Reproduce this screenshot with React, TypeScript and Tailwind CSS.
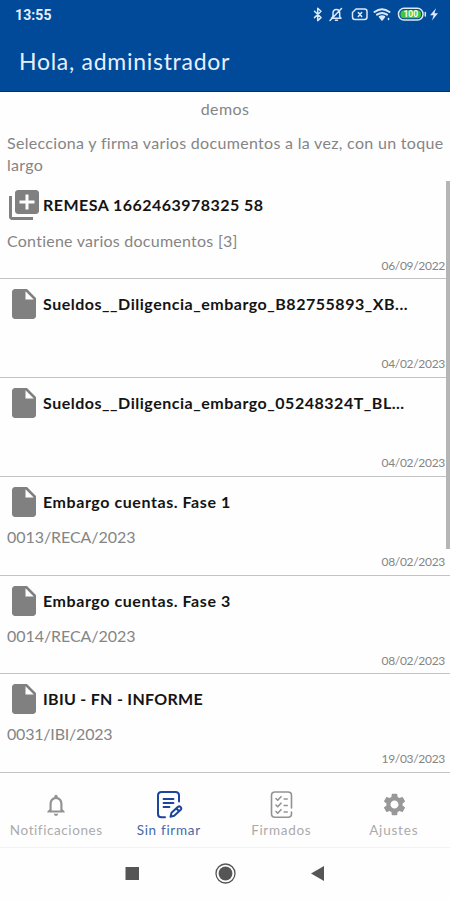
import React from "react";
import { MdInsertDriveFile, MdLibraryAdd, MdNotificationsNone, MdSettings } from "react-icons/md";

type Doc = { title: string; subtitle?: string; date: string; batch?: boolean; titleClass: string; subClass?: string };

const docs: Doc[] = [
  { title: "REMESA 1662463978325 58", subtitle: "Contiene varios documentos [3]", date: "06/09/2022", batch: true, titleClass: "tracking-[0.46px]", subClass: "tracking-[0.25px]" },
  { title: "Sueldos__Diligencia_embargo_B82755893_XB...", date: "04/02/2023", titleClass: "tracking-[0.52px]" },
  { title: "Sueldos__Diligencia_embargo_05248324T_BL...", date: "04/02/2023", titleClass: "tracking-[0.52px]" },
  { title: "Embargo cuentas. Fase 1", subtitle: "0013/RECA/2023", date: "08/02/2023", titleClass: "tracking-[0.57px]", subClass: "tracking-[-0.06px]" },
  { title: "Embargo cuentas. Fase 3", subtitle: "0014/RECA/2023", date: "08/02/2023", titleClass: "tracking-[0.57px]", subClass: "tracking-[-0.06px]" },
  { title: "IBIU - FN - INFORME", subtitle: "0031/IBI/2023", date: "19/03/2023", titleClass: "tracking-[0.3px]", subClass: "tracking-[-0.2px]" },
];

function StatusIcons() {
  return (
    <svg width="128" height="18" viewBox="312 6 128 18" fill="none" stroke="#dce8fa" strokeWidth="1.5" strokeLinecap="round" strokeLinejoin="round">
      <path d="M314.500 11.200l6.500 6.400-3.300 3V8.200l3.300 3-6.500 6.400" />
      <path d="M331.5 18.2h9.5l-1.3-1.6v-3.4c0-2.2-1.3-3.8-3.3-3.8s-3.4 1.6-3.4 3.8v3.4zM335.4 20.2h2M341.5 8.5l-11.5 12" />
      <path d="M356 9h8.5q2.5 0 2.500 2.500V17q0 2.500-2.500 2.500H355q-2.500 0-2.500-2.500v-4.500zM358.300 12.500l3.400 4M361.700 12.500l-3.400 4" />
      <path d="M374.500 12q7.500-5.500 15 0M377 14.700q5-3.400 10 0" strokeWidth="2" />
      <path d="M379.500 16.700q2.700-1.500 5 0L382 20z" fill="#dce8fa" />
      <path d="M388.500 18.500v1" />
      <rect x="398.500" y="8.300" width="24.500" height="11.800" rx="5.500" />
      <rect x="400.500" y="10.200" width="20.500" height="8" rx="3.500" fill="#45c53c" stroke="none" />
      <path d="M425.300 12.500v3.500" />
      <path d="M436 8.200l-6 7h3.500l-1.500 5.300 6-7.300h-3.500z" fill="#dce8fa" stroke="none" />
      <text x="410.800" y="17.300" fill="#ffffff" stroke="none" fontSize="8.500" fontWeight="700" textAnchor="middle" fontFamily="Roboto, sans-serif">100</text>
    </svg>
  );
}

function SignIcon() {
  return (
    <svg width="28" height="30" viewBox="0 0 28 30" fill="none" stroke="#1c459c" strokeWidth="2" strokeLinecap="round" strokeLinejoin="round">
      <path d="M10 27.300H6.500Q3 27.300 3 24V5.500Q3 2 6.500 2h14Q24 2 24 5.500v6" />
      <path d="M8.500 9h10M8.500 13h10M8.500 17h6" strokeWidth="1.800" />
      <path d="M15.500 26.800l1-4 6.500-6q1.500-1 2.700.3 1.200 1.300 0 2.700l-6.500 6zM21.500 18.500l2.500 2.700" strokeWidth="2" />
    </svg>
  );
}

function ChecklistIcon() {
  return (
    <svg width="28" height="30" viewBox="0 0 28 30" fill="none" stroke="#929292" strokeWidth="1.600" strokeLinecap="round" strokeLinejoin="round">
      <path d="M24.500 18V5.500Q24.500 2 21 2H8Q4.500 2 4.500 5.500v18.300q0 3.500 3.500 3.500h13q3.500 0 3.500-3.500V22" />
      <path d="M9 8.500l1.700 1.700L14 6.700M9 15l1.700 1.700 3.300-3.500M9 21.500l1.700 1.700 3.300-3.500M17.200 9h3M17.200 15.500h3M17.200 22h3" />
    </svg>
  );
}

function Tab({ label, icon, labelClass }: { label: string; icon: React.ReactNode; labelClass: string }) {
  return (
    <div className="flex flex-1 flex-col items-center pt-[9px]">
      <div className="flex h-[30px] items-center justify-center">{icon}</div>
      <span className={`whitespace-nowrap text-[13.5px] leading-[20px] ${labelClass}`}>{label}</span>
    </div>
  );
}

export default function App() {
  return (
    <div className="flex h-[900px] w-[450px] flex-col overflow-hidden bg-[#fefefe] font-['Lato',sans-serif]">
      <header className="h-[92px] shrink-0 border-b border-[#0a2590] bg-[#004a99] text-[#e6effd]">
        <div className="flex h-[30px] items-center justify-between pl-[15px] pr-[10px]">
          <span className="font-['Roboto',sans-serif] text-[14px] font-bold tracking-[0.1px]">13:55</span>
          <StatusIcons />
        </div>
        <h1 className="pl-[19px] pt-[16px] text-[23px] leading-[30px] tracking-[0.72px]">Hola, administrador</h1>
      </header>

      <main className="h-[688.5px] shrink-0 text-[#858585]">
        <p className="h-[40px] pt-[5px] text-center text-[16px] leading-[24px] tracking-[0.4px]">demos</p>
        <p className="h-[48.5px] pl-[7px] text-[16px] leading-[22px] tracking-[0.31px]">
          Selecciona y firma varios documentos a la vez, con un toque
          <br />
          largo
        </p>
        <div className="relative">
          {docs.map((doc, i) => (
            <article key={i} className="flex h-[98.75px] flex-col border-b-[1.5px] border-[#c3c3c3] pl-[7px] pt-[7px]">
              <div className={doc.batch ? "-mt-px mb-px flex h-9 items-center" : "flex h-9 items-center"}>
                {doc.batch ? <MdLibraryAdd size={36} color="#808080" className="-ml-px mr-px shrink-0" /> : <MdInsertDriveFile size={36} color="#808080" className="-ml-px mr-px shrink-0" />}
                <h2 className={`whitespace-nowrap text-[16px] font-bold leading-[24px] text-[#141414] ${doc.titleClass}`}>{doc.title}</h2>
              </div>
              <p className={`h-[34px] pt-[5px] text-[16px] leading-[24px] ${doc.subClass ?? ""}`}>{doc.subtitle}</p>
              <time className="self-end pr-[5px] text-[12px] leading-[16px] tracking-[-0.3px]">{doc.date}</time>
            </article>
          ))}
          <div className="absolute right-0 top-0 h-[368px] w-1 bg-[#b5b5b5]" />
        </div>
      </main>

      <nav className="flex h-[67px] shrink-0 border-b border-[#f3f3f3]">
        <Tab label="Notificaciones" labelClass="text-[#ababab] tracking-[0.58px]" icon={<MdNotificationsNone size={26} color="#929292" />} />
        <Tab label="Sin firmar" labelClass="text-[#4668a9] tracking-[0.7px]" icon={<SignIcon />} />
        <Tab label="Firmados" labelClass="text-[#ababab] tracking-[0.7px]" icon={<ChecklistIcon />} />
        <Tab label="Ajustes" labelClass="text-[#ababab] tracking-[0.8px]" icon={<MdSettings size={27} color="#989898" className="ml-px" />} />
      </nav>

      <div className="flex h-[53px] shrink-0 items-center">
        <svg width="450" height="30" viewBox="0 0 450 30" fill="#555555">
          <rect x="125.500" y="8" width="13.500" height="13" />
          <circle cx="225.500" cy="14.500" r="9.500" fill="none" stroke="#555555" strokeWidth="1.300" />
          <circle cx="225.500" cy="14.500" r="6.900" />
          <path d="M324 7v15L311 14.500z" />
        </svg>
      </div>
    </div>
  );
}
